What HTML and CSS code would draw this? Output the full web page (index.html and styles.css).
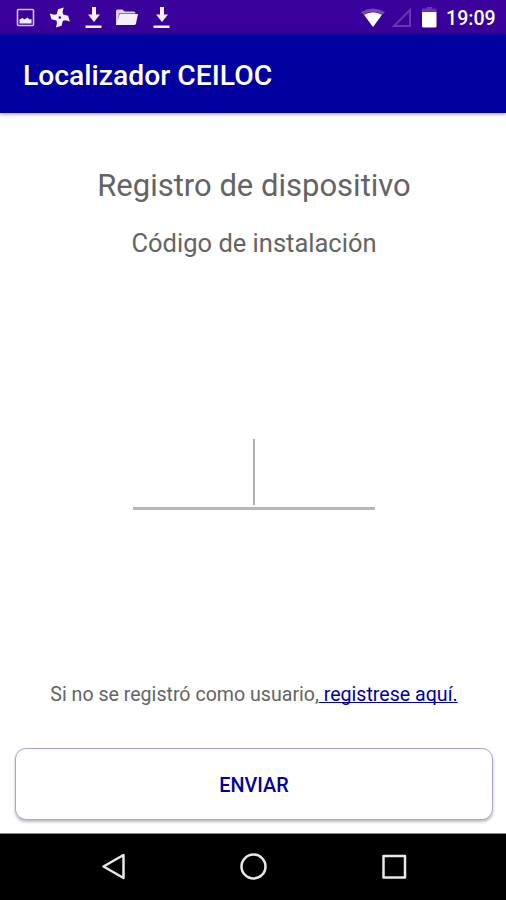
FILE: index.html
```html
<!DOCTYPE html>
<html lang="es">
<head>
<meta charset="utf-8">
<title>Localizador CEILOC</title>
<link rel="stylesheet" href="styles.css">
</head>
<body>
<div class="screen">
  <div class="status">
    <svg class="status-icons" width="180" height="35" viewBox="0 0 180 35" fill="#f4f0fa">
      <rect x="17.500" y="9.500" width="16" height="16" rx="1" fill="none" stroke="#d3c4ec" stroke-width="1.600"/>
      <path d="M19.500 23.500v-4l3-1.500 2 1.500 3-2 2 2 2-.5v4.500z"/>
      <g transform="translate(59.8 17.500) rotate(8)">
        <path id="blade" d="M-2.500 2L-3.500-2-3-8 2.500-10.500 2-6 3.500-1.500z"/>
        <use href="#blade" transform="rotate(90)"/><use href="#blade" transform="rotate(180)"/><use href="#blade" transform="rotate(270)"/>
        <circle r="1.300" fill="#3a009a"/>
      </g>
      <path d="M92 7h4v7.500h4L94 22l-6-7.500h4zM85.500 25.500h16V28h-16z"/>
      <path d="M116 11q0-1.500 1.500-1.500h5l2 2h9q2 0 2 2H119L117.500 25H116z" fill="#ded4f0"/><path d="M119.500 14h18.500l-2 9.500q-.5 1.500-2 1.500H116.500z"/>
      <path d="M160 7h4v7.500h4L162 22l-6-7.500h4zM153.500 25.500h16V28h-16z"/>
    </svg>
    <svg class="status-icons" width="82" height="35" viewBox="360 0 82 35" fill="#fff">
      <path d="M361 12q12-7 24 0l-2.500 2.500q-9.500-5.500-19 0z" fill="#7546bb"/><path d="M364 14.800q9-5 18 0L373 27z"/>
      <path d="M410 10v16h-16z" fill="none" stroke="#6836b4" stroke-width="2"/>
      <path d="M422 8.500h5V7h5v1.500h4.500V12H422z" fill="#6836b4"/><path d="M422 12h14.500v14q0 1.500-1.500 1.500h-11.500q-1.500 0-1.500-1.500z"/>
    </svg>
    <span class="clock">19:09</span>
  </div>
  <header class="bar"><h1>Localizador CEILOC</h1></header>
  <main class="content">
    <h2>Registro de dispositivo</h2>
    <p class="label">Código de instalación</p>
    <div class="field"><i class="caret"></i></div>
    <p class="signup">Si no se registró como usuario,<a href="#"> registrese aquí.</a></p>
    <button class="send">ENVIAR</button>
  </main>
  <nav class="nav">
    <svg width="506" height="66" viewBox="0 834 506 66" fill="none" stroke="#e8e8e8" stroke-width="2.500" stroke-linejoin="round">
      <path d="M123.500 855v23l-20-11.500z"/><circle cx="253.500" cy="866.500" r="12"/><path d="M383.500 856h21.500v21.500h-21.500z"/>
    </svg>
  </nav>
</div>
</body>
</html>
```
FILE: styles.css
```css
* { box-sizing: border-box; }
body { margin: 0; font-family: Roboto, sans-serif; background: #fff; }
.screen { width: 506px; height: 900px; display: flex; flex-direction: column; overflow: hidden; }
.status { height: 34px; flex: none; background: #3a009a; display: flex; justify-content: space-between; padding-right: 10px; }
.status-icons { display: block; flex: none; }
.status-icons + .status-icons { margin-left: auto; margin-right: 4px; }
.clock { color: #fff; font-size: 19.6px; font-weight: 500; line-height: 37px; width: 50px; white-space: nowrap; }
.bar { height: 79px; flex: none; background: #02009f; padding-left: 23px; box-shadow: 0 1px 4px #0006; }
h1 { margin: 0; color: #fff; font-size: 28.3px; line-height: 84px; font-weight: 500; white-space: nowrap; }
.content { flex: 1; display: flex; flex-direction: column; align-items: center; padding: 53px 13px 0 15px; color: #646464; }
h2 { margin: 0; font-size: 31px; line-height: 40px; font-weight: 400; white-space: nowrap; }
.label { margin: 21px 0 0; font-size: 25.5px; line-height: 32px; white-space: nowrap; }
.field { width: 242px; height: 71px; margin-top: 180px; margin-right: 1px; border-bottom: 3px solid #b7b7b7; display: flex; justify-content: center; }
.caret { width: 2px; height: 66px; background: #b0b0b0; }
.signup { margin: 171px 0 0; font-size: 19.6px; line-height: 28px; white-space: nowrap; }
.signup a { color: #02009f; text-decoration-skip-ink: none; }
.send { width: 478px; height: 72px; margin-top: 39px; padding: 2px 0 0; background: #fff; border: 1.5px solid #aaa5d8; border-radius: 11px; box-shadow: 0 2px 3px #0004; color: #02009f; font: 500 19.8px Roboto, sans-serif; }
.nav { height: 67px; flex: none; background: #000; border-top: 1px solid #888; }
.nav svg { display: block; }
```
